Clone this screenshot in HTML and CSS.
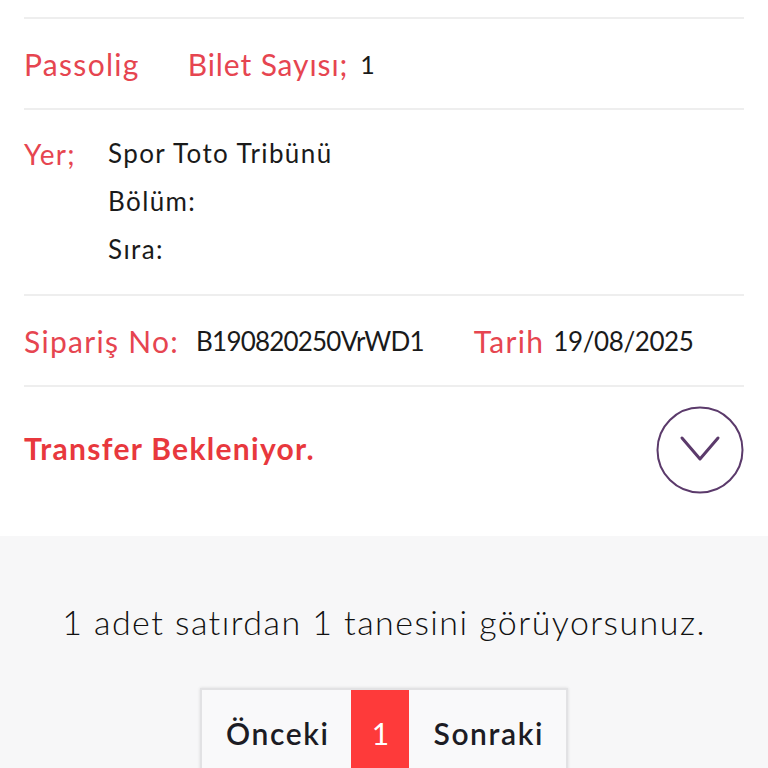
FILE: index.html
```html
<!DOCTYPE html>
<html lang="tr">
<head>
<meta charset="utf-8">
<link rel="stylesheet" href="styles.css">
</head>
<body>
<div class="card">
  <div class="row row-top">
    <span class="label">Passolig</span>
    <span class="label label-gap">Bilet Sayısı;</span>
    <span class="value small">1</span>
  </div>
  <div class="row row-place">
    <span class="label yer">Yer;</span>
    <div class="place-lines">
      <span class="value">Spor Toto Tribünü</span>
      <span class="value">Bölüm:</span>
      <span class="value">Sıra:</span>
    </div>
  </div>
  <div class="row row-order">
    <span class="label">Sipariş No:</span>
    <span class="value order-no">B190820250VrWD1</span>
    <span class="label tarih">Tarih</span>
    <span class="value date">19/08/2025</span>
  </div>
  <div class="row row-status">
    <span class="status">Transfer Bekleniyor.</span>
    <span class="toggle">
      <svg width="88" height="88" viewBox="0 0 88 88">
        <circle cx="44" cy="44" r="42.5" fill="none" stroke="#5b3a6b" stroke-width="2"/>
        <path d="M26 32 L44 53 L62 32" fill="none" stroke="#5b3a6b" stroke-width="3" stroke-linecap="round" stroke-linejoin="round"/>
      </svg>
    </span>
  </div>
</div>
<div class="footer">
  <p class="info">1 adet satırdan 1 tanesini görüyorsunuz.</p>
  <div class="pager">
    <span class="page-btn">Önceki</span>
    <span class="page-btn active">1</span>
    <span class="page-btn">Sonraki</span>
  </div>
</div>
</body>
</html>
```
FILE: styles.css
```css
html, body {
  margin: 0;
  padding: 0;
}
body {
  background: #f7f7f8;
  font-family: "Lato", "Noto Sans", sans-serif;
  color: #1a1a1a;
  width: 768px;
  height: 768px;
  overflow: hidden;
}
.card {
  background: #ffffff;
  padding: 17px 24px 0;
  height: 519px;
}
.row {
  border-top: 2px solid #eeeeee;
  display: flex;
  align-items: center;
}
.row-top {
  height: 89px;
}
.label {
  color: #e64550;
  font-size: 30px;
  font-weight: 400;
  letter-spacing: 1.3px;
}
.label-gap {
  margin-left: 48px;
  margin-right: 12px;
  letter-spacing: 0.9px;
}
.value {
  font-size: 26px;
  font-weight: 400;
  color: #1a1a1a;
  letter-spacing: 1.4px;
}
.small {
  font-size: 25px;
  letter-spacing: 0;
}
.row-place {
  height: 184px;
  align-items: flex-start;
}
.yer {
  font-size: 28px;
  margin-top: 27px;
  width: 84px;
}
.place-lines {
  display: flex;
  flex-direction: column;
  margin-top: 19px;
}
.place-lines .value {
  line-height: 48px;
}
.row-order {
  height: 89px;
}
.order-no {
  margin-left: 17px;
  letter-spacing: -0.8px;
}
.date {
  letter-spacing: -0.4px;
}
.tarih {
  margin-left: 50px;
  margin-right: 9px;
}
.row-status {
  height: 149px;
  justify-content: space-between;
  align-items: flex-start;
}
.status {
  color: #e8383d;
  font-size: 30px;
  font-weight: 700;
  letter-spacing: 1.3px;
  margin-top: 43px;
}
.toggle {
  display: block;
  margin-top: 19px;
  line-height: 0;
}
.footer {
  display: flex;
  flex-direction: column;
  align-items: center;
}
.info {
  margin: 64px 0 0;
  font-size: 34px;
  font-weight: 300;
  line-height: 44px;
  letter-spacing: 1.45px;
  color: #111111;
}
.pager {
  margin-top: 44px;
  display: flex;
  border: 2px solid #e2e2e4;
  border-bottom: none;
  background: #f9f9fa;
  box-shadow: 0 0 3px rgba(0,0,0,0.12);
  height: 90px;
}
.page-btn {
  font-size: 30px;
  font-weight: 600;
  color: #1c1c24;
  letter-spacing: 1.6px;
  padding: 25px 22px 0 24px;
}
.page-btn.active {
  background: #fe3a3a;
  color: #ffffff;
  font-weight: 400;
  letter-spacing: 0;
  padding: 25px 0 0;
  width: 58px;
  text-align: center;
}
```
